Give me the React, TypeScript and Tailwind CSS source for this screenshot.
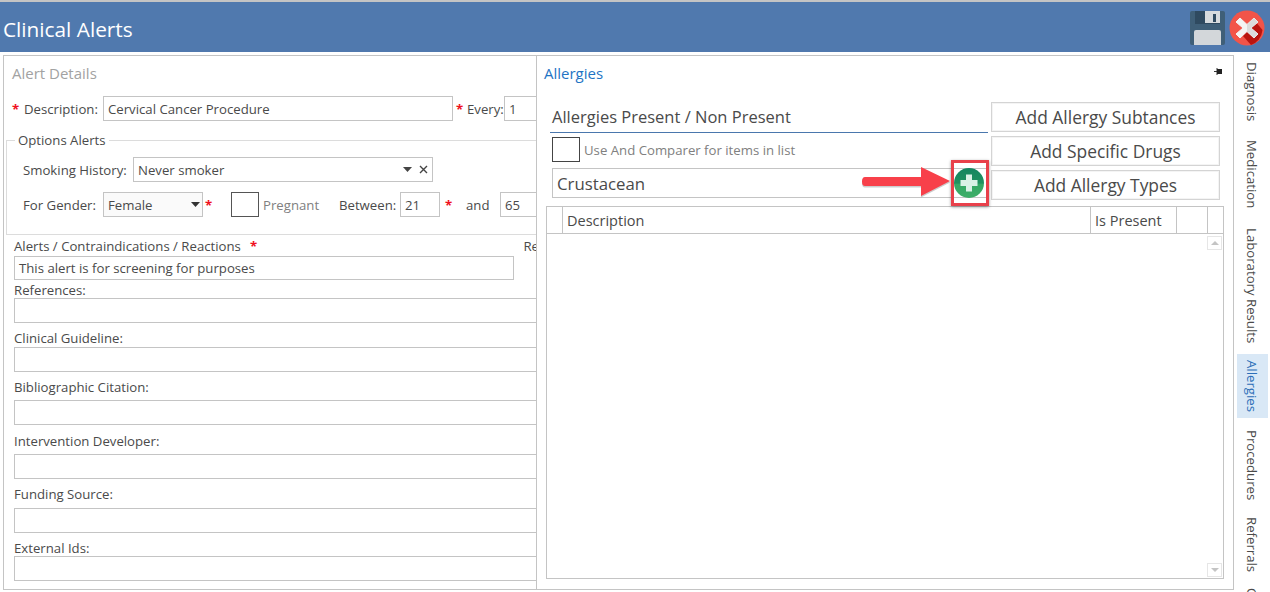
const font = { fontFamily: '"Open Sans", "Noto Sans", sans-serif' };

const fields = [
  { label: "References:", labelCls: "mt-[2px]", inputCls: "mt-0" },
  { label: "Clinical Guideline:", labelCls: "mt-[7px]", inputCls: "mt-px" },
  { label: "Bibliographic Citation:", labelCls: "mt-[7px]", inputCls: "mt-[5px]" },
  { label: "Intervention Developer:", labelCls: "mt-[8px]", inputCls: "mt-[5px]" },
  { label: "Funding Source:", labelCls: "mt-[7px]", inputCls: "mt-[6px]" },
  { label: "External Ids:", labelCls: "mt-[7px]", inputCls: "mt-0" },
];

const tabs = [
  { name: "Diagnosis", cls: "h-[79px]" },
  { name: "Medication", cls: "h-[87px]" },
  { name: "Laboratory Results", cls: "h-[136px]" },
  { name: "Allergies", cls: "h-[64px] bg-[#d9e8f6] text-[#2d6fb8]" },
  { name: "Procedures", cls: "h-[95px]" },
  { name: "Referrals", cls: "h-[63px]" },
];

function Star({ className = "" }: { className?: string }) {
  return <span className={"shrink-0 font-bold text-[#f01020] " + className}>*</span>;
}

function SaveIcon() {
  return (
    <svg width="35" height="35" viewBox="0 0 35 35">
      <rect x="0" y="0" width="35" height="34" rx="2" fill="#3f5f78" />
      <rect x="5" y="0" width="25" height="13" fill="#2f4a60" />
      <rect x="15" y="0" width="15" height="12" fill="#d7dbde" />
      <rect x="23" y="3" width="3" height="8" fill="#2f4a60" />
      <path d="M4 21 Q4 19 6 19 H29 Q31 19 31 21 V34 H4 Z" fill="#d3d7da" />
    </svg>
  );
}

function CloseIcon() {
  return (
    <svg width="36" height="36" viewBox="0 0 36 36">
      <circle cx="18" cy="18" r="17.5" fill="#f25449" />
      <path d="M14 26 L26 11 L33.5 20 A17.5 17.5 0 0 1 22 35 Z" fill="#b9140f" />
      <path d="M11 8 L18 14.5 L25 8 L29 12 L22 18 L29 24 L25 28 L18 21.5 L11 28 L7 24 L14 18 L7 12 Z" fill="#f4f4f4" stroke="#f4f4f4" strokeWidth="1" strokeLinejoin="round" />
      <path d="M25 8 L29 12 L22 18 L29 24 L25 28 L18 21.5 L18 14.5 Z" fill="#dcdcdc" />
    </svg>
  );
}

function Annotation() {
  return (
    <div className="absolute left-[862px] top-[160px] h-[46px] w-[127px]">
      <svg className="absolute left-0 top-[6px]" width="90" height="32" viewBox="0 0 90 32">
        <path d="M3 11 H59 V1 L88 15 L59 30 V20 H3 Q0 20 0 15.5 Q0 11 3 11 Z" fill="#8d8d8d" opacity="0.45" transform="translate(0 1.5)" />
        <path d="M3 11 H59 V1 L88 15 L59 30 V20 H3 Q0 20 0 15.5 Q0 11 3 11 Z" fill="#f8404a" />
      </svg>
      <div className="absolute left-[89px] top-0 flex h-[46px] w-[38px] items-center justify-center border-[3px] border-[#e8404a] shadow-[0_1px_3px_rgba(0,0,0,0.4)]">
        <svg width="30" height="30" viewBox="0 0 30 30" className="-translate-x-px">
          <defs>
            <linearGradient id="plusBg" x1="0" y1="0" x2="0" y2="1">
              <stop offset="0" stopColor="#148560" />
              <stop offset="0.5" stopColor="#1f9160" />
              <stop offset="0.55" stopColor="#34a765" />
              <stop offset="1" stopColor="#3fae68" />
            </linearGradient>
          </defs>
          <circle cx="15" cy="15" r="15" fill="url(#plusBg)" />
          <path d="M12 6.5 H18 V12 H23.5 V18 H18 V23.5 H12 V18 H6.5 V12 H12 Z" fill="#d9f1e6" />
        </svg>
      </div>
    </div>
  );
}

export default function App() {
  return (
    <div
      className="relative h-[592px] w-[1270px] overflow-hidden bg-white text-[13.2px] leading-[16px] text-[#4a4a4a]"
      style={font}
    >
      <div className="h-[2px] bg-[#c4c4c4]" />
      <header className="flex h-[50px] items-center bg-[#5079ae] pl-[3px] pr-[5px] pt-[2px]">
        <h1 className="mt-[2px] text-[20.8px] font-normal text-white">Clinical Alerts</h1>
        <div className="ml-auto flex items-center gap-[4px]">
          <SaveIcon />
          <CloseIcon />
        </div>
      </header>

      <div className="flex">
        <div className="ml-[3px] mt-[3px] flex h-[535px] w-[1231px] border border-[#c4c4c4]">
          {/* left panel, clipped by the allergies panel */}
          <section className="h-full w-[532px] overflow-hidden">
            <div className="flex h-[40px] items-start pl-[8px] pt-[8px] text-[15px] leading-[18px] text-[#a2a2a2]">
              Alert Details
            </div>
            <div className="flex h-[25px] items-center">
              <Star className="ml-[8px] w-[12px]" />
              <span className="w-[79px] shrink-0">Description:</span>
              <div className="flex h-[25px] w-[350px] shrink-0 items-center border border-[#c4c4c4] pl-[4px]">
                Cervical Cancer Procedure
              </div>
              <Star className="ml-[3px] w-[11px]" />
              <span className="w-[37px] shrink-0">Every:</span>
              <div className="flex h-[25px] w-[60px] shrink-0 items-center border border-[#c4c4c4] pl-[4px]">1</div>
            </div>

            <fieldset className="ml-[2px] mt-[11px] h-[103px] w-[600px] border border-[#dcdcdc]">
              <legend className="ml-[8px] px-[3px] leading-[16px]">Options Alerts</legend>
              <div className="ml-[16px] mt-[9px] flex h-[25px] items-center">
                <span className="w-[110px] shrink-0">Smoking History:</span>
                <div className="flex h-[25px] w-[300px] items-center border border-[#c4c4c4] pl-[4px]">
                  Never smoker
                  <svg className="ml-auto" width="10" height="5" viewBox="0 0 10 5">
                    <path d="M0 0 H9 L4.5 5 Z" fill="#444" />
                  </svg>
                  <svg className="ml-[6px] mr-[4px]" width="9" height="9" viewBox="0 0 9 9">
                    <path d="M1 1 L8 8 M8 1 L1 8" stroke="#444" strokeWidth="1.4" />
                  </svg>
                </div>
              </div>
              <div className="ml-[16px] mt-[10px] flex h-[25px] items-center">
                <span className="w-[80px] shrink-0">For Gender:</span>
                <div className="flex h-[25px] w-[100px] shrink-0 items-center border border-[#c4c4c4] bg-[#fafafa] pl-[4px] pr-[2px]">
                  Female
                  <svg className="ml-auto" width="9" height="5" viewBox="0 0 9 5">
                    <path d="M0 0 H9 L4.5 5 Z" fill="#333" />
                  </svg>
                </div>
                <Star className="ml-[2px] w-[26px]" />
                <div className="h-[25px] w-[28px] shrink-0 border border-[#555]" />
                <span className="ml-[4px] w-[76px] shrink-0 text-[#808080]">Pregnant</span>
                <span className="w-[61px] shrink-0">Between:</span>
                <div className="flex h-[25px] w-[40px] shrink-0 items-center border border-[#c4c4c4] pl-[4px]">21</div>
                <Star className="ml-[5px] w-[21px]" />
                <span className="w-[34px] shrink-0">and</span>
                <div className="flex h-[25px] w-[60px] shrink-0 items-center border border-[#c4c4c4] pl-[4px]">65</div>
              </div>
            </fieldset>

            <div className="ml-[10px] mr-[-3px] mt-[3px] flex h-[16px] items-center">
              <span>Alerts / Contraindications / Reactions</span>
              <Star className="ml-[9px]" />
              <span className="ml-auto">Re</span>
            </div>
            <div className="ml-[10px] mt-[2px] flex h-[24px] w-[500px] items-center border border-[#c4c4c4] pl-[4px]">
              This alert is for screening for purposes
            </div>
            {fields.map((f) => (
              <div key={f.label} className="ml-[10px]">
                <div className={"h-[16px] " + f.labelCls}>{f.label}</div>
                <div className={"h-[25px] w-[600px] border border-[#c4c4c4] " + f.inputCls} />
              </div>
            ))}
          </section>

          {/* allergies panel */}
          <section className="flex h-full flex-1 flex-col border-l border-[#c4c4c4]">
            <div className="flex h-[46px] items-start justify-between pl-[7px] pr-[11px] pt-[8px]">
              <span className="text-[15px] leading-[18px] text-[#1f74c4]">Allergies</span>
              <svg className="mt-[4px]" width="8" height="7" viewBox="0 0 8 7">
                <path d="M0 3.5 H3 M3 0 V7" stroke="#333" strokeWidth="1" fill="none" />
                <rect x="3" y="1" width="5" height="5" fill="#222" />
              </svg>
            </div>
            <div className="flex">
              <div className="ml-[13px] w-[438px]">
                <div className="flex h-[31px] items-center border-b border-[#4a77ad] pl-[2px] text-[16.5px]">
                  Allergies Present / Non Present
                </div>
                <div className="mt-[4px] flex h-[25px] items-center">
                  <div className="ml-[2px] h-[25px] w-[28px] border border-[#444]" />
                  <span className="ml-[4px] pt-px text-[13.2px] text-[#808080]">Use And Comparer for items in list</span>
                </div>
                <div className="ml-[2px] mt-[6px] flex h-[30px] items-center border border-[#c4c4c4] pl-[4px] pt-px text-[16.8px]">
                  Crustacean
                </div>
              </div>
              <div className="ml-[3px] flex w-[229px] flex-col gap-[4px]">
                {["Add Allergy Subtances", "Add Specific Drugs", "Add Allergy Types"].map((b) => (
                  <button key={b} className="h-[30px] border border-[#d4d4d4] text-[17.4px] text-[#4a4a4a] shadow-[inset_0_0_0_1px_#f4f4f4]">
                    {b}
                  </button>
                ))}
              </div>
            </div>
            <div className="ml-[9px] mt-[6px] flex h-[373px] w-[678px] flex-col border border-[#c4c4c4]">
              <div className="flex h-[27px] shrink-0 border-b border-[#c4c4c4] text-[14.5px]">
                <div className="w-[16px] border-r border-[#c4c4c4]" />
                <div className="flex w-[528px] items-center border-r border-[#c4c4c4] pl-[4px] pt-px">Description</div>
                <div className="flex w-[86px] items-center border-r border-[#c4c4c4] pl-[4px] pt-px">Is Present</div>
                <div className="w-[31px] border-r border-[#c4c4c4]" />
              </div>
              <div className="flex flex-1 justify-end pb-px pr-px pt-[2px]">
                <div className="flex w-[15px] flex-col justify-between">
                  <div className="flex h-[14px] w-[15px] items-center justify-center border border-[#e6e6e6]">
                    <svg width="8" height="4" viewBox="0 0 8 4"><path d="M0 4 H8 L4 0 Z" fill="#c4c4c4" /></svg>
                  </div>
                  <div className="flex h-[14px] w-[15px] items-center justify-center border border-[#e6e6e6]">
                    <svg width="8" height="4" viewBox="0 0 8 4"><path d="M0 0 H8 L4 4 Z" fill="#c4c4c4" /></svg>
                  </div>
                </div>
              </div>
            </div>
          </section>
        </div>

        {/* side tabs */}
        <nav className="ml-[3px] w-[31px] shrink-0 text-[13.2px]">
          {tabs.map((t) => (
            <div key={t.name} className={"flex w-[31px] items-center justify-center pr-[2px] " + t.cls}>
              <span className="whitespace-nowrap [writing-mode:vertical-rl]">{t.name}</span>
            </div>
          ))}
          <div className="flex w-[31px] justify-center pr-[2px] pt-[12px]">
            <span className="whitespace-nowrap [writing-mode:vertical-rl]">Codes</span>
          </div>
        </nav>
      </div>

      <Annotation />
    </div>
  );
}
